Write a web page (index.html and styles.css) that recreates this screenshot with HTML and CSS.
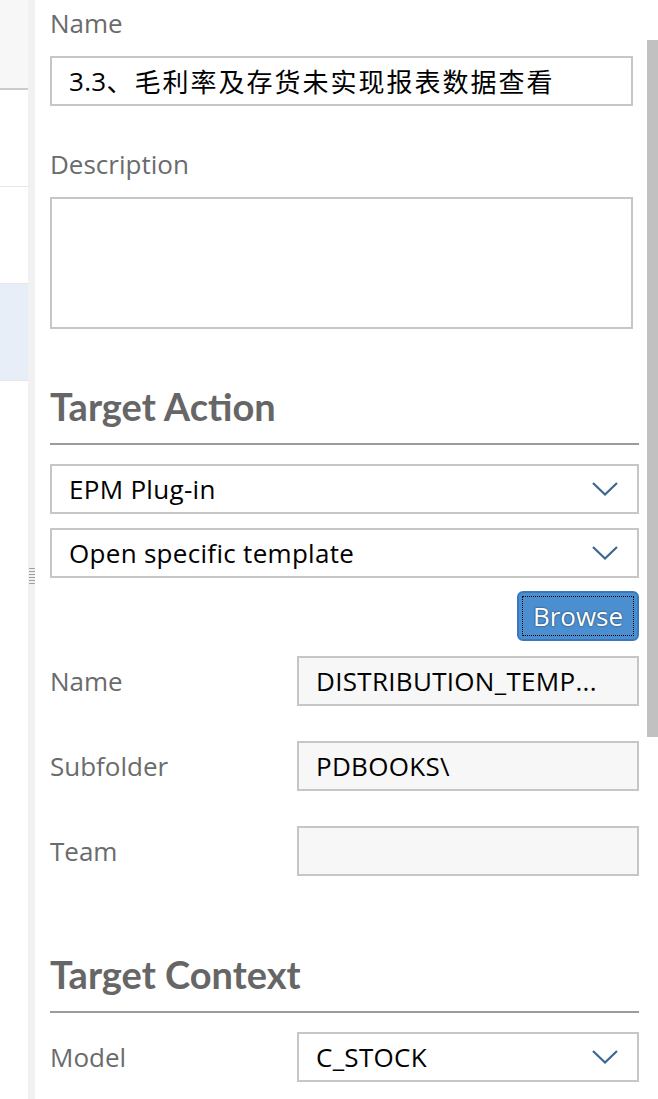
FILE: index.html
```html
<!DOCTYPE html>
<html lang="en">

<head>
  <meta charset="UTF-8">
  <meta name="viewport" content="width=device-width, initial-scale=1.0">
  <title>Tile settings</title>
  <link rel="stylesheet" href="styles.css">
</head>

<body>
  <div class="page">
    <!-- left list, mostly hidden behind the panel -->
    <div class="nav">
      <div class="navHead"></div>
      <div class="navRow"></div>
      <div class="navRow"></div>
      <div class="navRow selected"></div>
    </div>

    <div class="splitter">
      <div class="grip"></div>
    </div>

    <div class="panel">
      <div class="field">
        <div class="label">Name</div>
        <div class="input short">3.3<span class="cjk">、毛利率及存货未实现报表数据查看</span></div>
      </div>

      <div class="field">
        <div class="label">Description</div>
        <div class="input short textarea"></div>
      </div>

      <h2 class="sectionTitle first">Target Action</h2>

      <div class="input select gapTop">
        <span>EPM Plug-in</span>
        <svg class="arrow" viewBox="0 0 26 14"><path d="M1 1 L13 12.5 L25 1" /></svg>
      </div>
      <div class="input select gapSmall">
        <span>Open specific template</span>
        <svg class="arrow" viewBox="0 0 26 14"><path d="M1 1 L13 12.5 L25 1" /></svg>
      </div>

      <div class="btnRow">
        <button type="button" class="browseBtn">Browse</button>
      </div>

      <div class="formRows">
        <div class="formRow">
          <div class="rowLabel">Name</div>
          <div class="input readonly">DISTRIBUTION_TEMP...</div>
        </div>
        <div class="formRow">
          <div class="rowLabel">Subfolder</div>
          <div class="input readonly">PDBOOKS\</div>
        </div>
        <div class="formRow">
          <div class="rowLabel">Team</div>
          <div class="input readonly"></div>
        </div>
      </div>

      <h2 class="sectionTitle second">Target Context</h2>

      <div class="formRow gapTop">
        <div class="rowLabel">Model</div>
        <div class="input select">
          <span>C_STOCK</span>
          <svg class="arrow" viewBox="0 0 26 14"><path d="M1 1 L13 12.5 L25 1" /></svg>
        </div>
      </div>
    </div>

    <div class="scrollbar">
      <div class="thumb"></div>
    </div>
  </div>
</body>

</html>
```

FILE: styles.css
```css
* {
  padding: 0;
  margin: 0;
  box-sizing: border-box;
}

body {
  font-family: "Open Sans", "Noto Sans CJK SC", sans-serif;
  font-size: 26px;
  color: #000;
  background-color: #fff;
  overflow: hidden;
}

.page {
  display: flex;
  height: 100vh;
  width: 100vw;
}

/* left list */
.nav {
  width: 28px;
  flex-shrink: 0;
}

.navHead {
  height: 90px;
  background-color: #f7f7f7;
  border-bottom: 2px solid #cbcbcb;
}

.navRow {
  height: 97px;
  border-bottom: 1px solid #e6e6e6;
}

.navRow.selected {
  background-color: #e8eef7;
}

.splitter {
  width: 7px;
  flex-shrink: 0;
  background-color: #f1f1f1;
}

.grip {
  width: 6px;
  height: 16px;
  margin: 568px auto 0;
  background: repeating-linear-gradient(to bottom, #a0a0a0 0, #a0a0a0 1px, transparent 1px, transparent 3px);
}

/* form panel */
.panel {
  flex: 1;
  padding: 6px 8px 0 15px;
}

.field {
  margin-bottom: 41px;
}

.label,
.rowLabel {
  color: #6a6b6d;
  line-height: 34px;
}

.label {
  margin-bottom: 16px;
}

.input {
  height: 50px;
  border: 2px solid #c6c6c6;
  background-color: #fff;
  padding: 0 17px;
  display: flex;
  align-items: center;
  white-space: nowrap;
  overflow: hidden;
  letter-spacing: 0.3px;
}

.input.short {
  width: calc(100% - 6px);
}

.input.textarea {
  height: 132px;
}

.input.readonly {
  background-color: #f7f7f7;
}

.cjk {
  letter-spacing: 2px;
}

.select {
  justify-content: space-between;
  padding-right: 19px;
}

.arrow {
  width: 26px;
  height: 14px;
  fill: none;
  stroke: #3b6791;
  stroke-width: 2.2;
}

.sectionTitle {
  font-family: "Lato", sans-serif;
  font-weight: bold;
  font-size: 38px;
  line-height: 46px;
  color: #666;
  padding-bottom: 14px;
  border-bottom: 2px solid #9c9c9c;
}

.sectionTitle.first {
  margin-top: 54px;
}

.sectionTitle.second {
  margin-top: 75px;
}

.gapTop {
  margin-top: 19px;
}

.gapSmall {
  margin-top: 14px;
}

.btnRow {
  display: flex;
  justify-content: flex-end;
  margin-top: 13px;
}

.browseBtn {
  width: 122px;
  height: 50px;
  font-family: "Open Sans", sans-serif;
  font-size: 26px;
  color: #fff;
  text-shadow: 0 0 2px rgba(0, 0, 0, 0.7);
  background-color: #4b8fd1;
  border: 2px solid #3a78ba;
  border-radius: 6px;
  outline: 1px dotted #000;
  outline-offset: -6px;
}

.formRows {
  display: flex;
  flex-direction: column;
  gap: 35px;
  margin-top: 15px;
}

.formRow {
  display: flex;
  align-items: center;
}

.formRow>.rowLabel {
  width: 247px;
  flex-shrink: 0;
}

.formRow>.input {
  flex: 1;
}

/* right scrollbar */
.scrollbar {
  width: 11px;
  flex-shrink: 0;
}

.thumb {
  margin-top: 40px;
  height: 697px;
  background-color: #c1c1c1;
}
```
